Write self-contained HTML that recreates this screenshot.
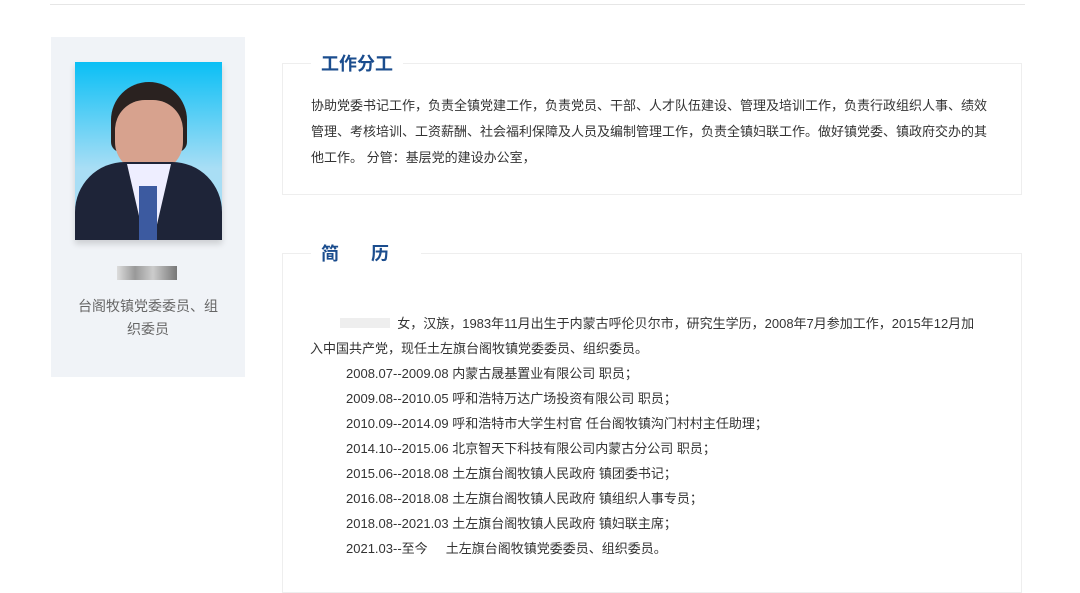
<!DOCTYPE html>
<html><head><meta charset="utf-8"><style>
body{margin:0;width:1080px;height:582px;overflow:hidden;background:#fff;font-family:"Liberation Sans","Noto Sans CJK SC",sans-serif;color:#333;position:relative}
.top{position:absolute;left:50px;top:4px;width:975px;height:1px;background:#e6e6e6}
.left{position:absolute;left:51px;top:37px;width:194px;height:340px;background:#f0f3f7}
.photo{position:absolute;left:24px;top:25px;width:147px;height:178px;background:linear-gradient(#0abff5,#a9def5 60%);overflow:hidden;box-shadow:0 4px 6px rgba(0,0,0,.15)}
.name{position:absolute;left:66px;top:229px;width:60px;height:14px;background:linear-gradient(90deg,#ddd,#999 30%,#ccc 60%,#777)}
.ttl{position:absolute;left:0;top:258px;width:194px;text-align:center;font-size:14px;line-height:23px;color:#666}
.box{position:absolute;left:282px;width:740px;border:1px solid #eee;box-sizing:border-box}
.h{position:absolute;top:-11px;left:28px;background:#fff;padding:0 10px;font-size:18px;font-weight:bold;color:#1b4d8e;line-height:22px}
.t{font-size:13px;line-height:26px;padding:0 28px;white-space:nowrap}
.r{font-size:13px;line-height:25px;white-space:nowrap}
.r p{margin:0;padding-left:36px}
</style></head><body>
<div class="top"></div>
<div class="left">
 <div class="photo">
  <div style="position:absolute;left:36px;top:20px;width:76px;height:70px;border-radius:38px 38px 10px 10px;background:#2a2220"></div>
  <div style="position:absolute;left:40px;top:38px;width:68px;height:72px;border-radius:30px;background:#d7a28e"></div>
  <div style="position:absolute;left:0;top:100px;width:147px;height:80px;border-radius:50px 50px 0 0;background:#1e2438"></div>
  <div style="position:absolute;left:52px;top:102px;width:44px;height:76px;background:#eef;clip-path:polygon(0 0,100% 0,60% 100%,40% 100%)"></div>
  <div style="position:absolute;left:64px;top:124px;width:18px;height:54px;background:#3c5aa0"></div>
 </div>
 <div class="name"></div>
 <div class="ttl">台阁牧镇党委委员、组<br>织委员</div>
</div>
<div class="box" style="top:63px;height:132px">
 <div class="h">工作分工</div>
 <div class="t" style="padding-top:29px">协助党委书记工作，负责全镇党建工作，负责党员、干部、人才队伍建设、管理及培训工作，负责行政组织人事、绩效<br>管理、考核培训、工资薪酬、社会福利保障及人员及编制管理工作，负责全镇妇联工作。做好镇党委、镇政府交办的其<br>他工作。 分管：基层党的建设办公室，</div>
</div>
<div class="box" style="top:253px;height:340px">
 <div class="h" style="letter-spacing:32px;padding-right:0">简历</div>
 <div class="r" style="padding:57px 20px 0 27px">
  <div><span style="display:inline-block;width:50px;height:10px;margin-left:30px;background:#eee"></span>&nbsp;&nbsp;女，汉族，1983年11月出生于内蒙古呼伦贝尔市，研究生学历，2008年7月参加工作，2015年12月加<br>入中国共产党，现任土左旗台阁牧镇党委委员、组织委员。</div>
  <p>2008.07--2009.08 内蒙古晟基置业有限公司 职员；</p>
  <p>2009.08--2010.05 呼和浩特万达广场投资有限公司 职员；</p>
  <p>2010.09--2014.09 呼和浩特市大学生村官 任台阁牧镇沟门村村主任助理；</p>
  <p>2014.10--2015.06 北京智天下科技有限公司内蒙古分公司 职员；</p>
  <p>2015.06--2018.08 土左旗台阁牧镇人民政府 镇团委书记；</p>
  <p>2016.08--2018.08 土左旗台阁牧镇人民政府 镇组织人事专员；</p>
  <p>2018.08--2021.03 土左旗台阁牧镇人民政府 镇妇联主席；</p>
  <p>2021.03--至今&nbsp;&nbsp;&nbsp;&nbsp;&nbsp;土左旗台阁牧镇党委委员、组织委员。</p>
 </div>
</div>
</body></html>
